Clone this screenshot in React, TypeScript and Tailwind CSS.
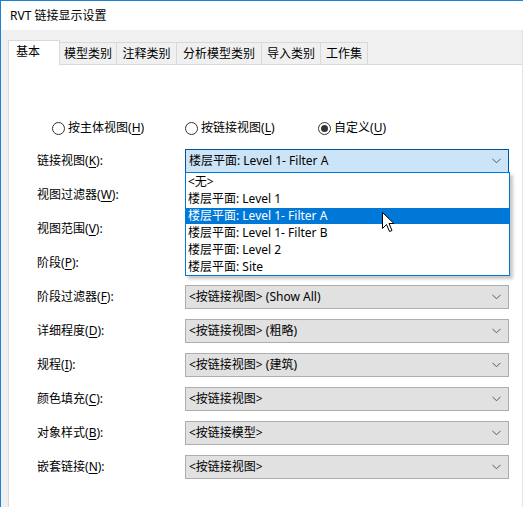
import React from "react";

const FONT = { fontFamily: '"Noto Sans", "Noto Sans CJK SC", sans-serif' };

function Chevron() {
  return (
    <svg width="9" height="6" viewBox="0 0 9 6" className="shrink-0">
      <path d="M0.5 0.8 L4.5 4.8 L8.5 0.8" fill="none" stroke="#5a5a5a" strokeWidth="1" />
    </svg>
  );
}

function U({ c }: { c: string }) {
  return <span className="underline underline-offset-[2px] decoration-[1px]">{c}</span>;
}

function Label({ text, k }: { text: string; k: string }) {
  return (
    <span className="whitespace-nowrap">
      {text}(<U c={k} />):
    </span>
  );
}

function Combo({ value, active }: { value: string; active?: boolean }) {
  return (
    <div
      className={
        "w-[324px] h-[24px] flex items-center justify-between pl-[3px] pr-[7px] border " +
        (active ? "bg-[#cce4f7] border-[#005499]" : "bg-[#e1e1e1] border-[#adadad]")
      }
    >
      <span className="whitespace-nowrap">{value}</span>
      <Chevron />
    </div>
  );
}

function Radio({ checked, text, k }: { checked?: boolean; text: string; k: string }) {
  return (
    <div className="flex items-center gap-[3px]">
      <div className="w-[13px] h-[13px] rounded-full border border-[#333] bg-white flex items-center justify-center">
        {checked && <div className="w-[7px] h-[7px] rounded-full bg-[#333]" />}
      </div>
      <span className="whitespace-nowrap">
        {text}(<U c={k} />)
      </span>
    </div>
  );
}

export default function App() {
  const tabs = [
    { t: "模型类别", w: 57 },
    { t: "注释类别", w: 60 },
    { t: "分析模型类别", w: 85 },
    { t: "导入类别", w: 59 },
    { t: "工作集", w: 47 },
  ];
  const rows: { l: string; k: string; v: string; active?: boolean }[] = [
    { l: "链接视图", k: "K", v: "楼层平面: Level 1- Filter A", active: true },
    { l: "视图过滤器", k: "W", v: "" },
    { l: "视图范围", k: "V", v: "" },
    { l: "阶段", k: "P", v: "" },
    { l: "阶段过滤器", k: "F", v: "<按链接视图> (Show All)" },
    { l: "详细程度", k: "D", v: "<按链接视图> (粗略)" },
    { l: "规程", k: "I", v: "<按链接视图> (建筑)" },
    { l: "颜色填充", k: "C", v: "<按链接视图>" },
    { l: "对象样式", k: "B", v: "<按链接模型>" },
    { l: "嵌套链接", k: "N", v: "<按链接视图>" },
  ];
  const items = [
    "<无>",
    "楼层平面: Level 1",
    "楼层平面: Level 1- Filter A",
    "楼层平面: Level 1- Filter B",
    "楼层平面: Level 2",
    "楼层平面: Site",
  ];
  return (
    <div
      style={FONT}
      className="relative w-[523px] h-[507px] overflow-hidden bg-[#f0f0f0] border-l border-t border-[#1883d7] text-[12px] leading-[16px] text-black flex flex-col"
    >
      <div className="h-[29px] bg-white flex items-center pl-[9px] shrink-0">
        <span className="text-[12px]">RVT 链接显示设置</span>
      </div>
      <div className="flex flex-col flex-1 pl-[7px] pt-[10px] border-r border-[#e3e3e3]">
        <div className="flex items-end h-[24px] relative z-10">
          <div className="w-[52px] h-[25px] bg-white border-l border-t border-r border-[#d9d9d9] pl-[7px] pt-[3px] -mb-[1px]">
            基本
          </div>
          {tabs.map((t) => (
            <div
              key={t.t}
              style={{ width: t.w }}
              className="h-[22px] border-t border-r border-[#d9d9d9] flex items-center justify-center pt-[1px]"
            >
              {t.t}
            </div>
          ))}
        </div>
        <div className="flex-1 bg-white border-l border-t border-[#d9d9d9]">
          <div className="flex items-center h-[16px] mt-[55px] pl-[43px]">
            <div className="w-[133px]">
              <Radio text="按主体视图" k="H" />
            </div>
            <div className="w-[133px]">
              <Radio text="按链接视图" k="L" />
            </div>
            <Radio checked text="自定义" k="U" />
          </div>
          <div className="flex flex-col gap-[10px] mt-[13px] pl-[28px]">
            {rows.map((r) => (
              <div key={r.l} className="flex items-center">
                <div className="w-[148px]">
                  <Label text={r.l} k={r.k} />
                </div>
                <Combo value={r.v} active={r.active} />
              </div>
            ))}
          </div>
        </div>
      </div>

      {/* dropdown list popup */}
      <div className="absolute left-[184px] top-[171px] w-[325px] h-[104px] bg-white border border-[#0078d7] shadow-[3px_3px_3px_rgba(0,0,0,0.22)] flex flex-col pt-[1px]">
        {items.map((it, i) => (
          <div
            key={it}
            className={
              "h-[17px] flex items-center pl-[2px] whitespace-nowrap " +
              (i === 2 ? "bg-[#0078d7] text-white" : "")
            }
          >
            {it}
          </div>
        ))}
      </div>

      {/* mouse cursor */}
      <svg
        className="absolute left-[381px] top-[211px]"
        width="13"
        height="21"
        viewBox="0 0 13 21"
      >
        <path
          d="M0.5 0.5 L0.5 16.5 L4.5 12.5 L7.5 19.5 L10 18.5 L7 11.5 L12 11.5 Z"
          fill="white"
          stroke="black"
          strokeWidth="1"
          strokeLinejoin="miter"
        />
      </svg>
    </div>
  );
}
